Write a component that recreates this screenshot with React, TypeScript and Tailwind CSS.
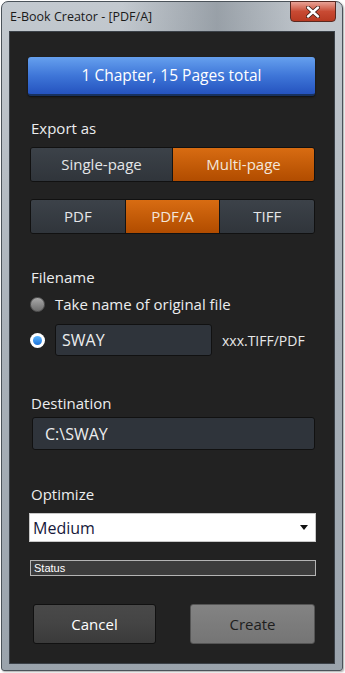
import React from 'react';

const font = { fontFamily: '"Open Sans", "Noto Sans", sans-serif' };

const Segment: React.FC<{ label: string; active?: boolean; last?: boolean }> = ({ label, active, last }) => (
  <div
    className={`flex-1 flex items-center justify-center text-[15px] ${last ? '' : 'border-r border-[#141414]'} ${
      active
        ? 'bg-gradient-to-b from-[#d86c12] to-[#b14c00] text-[#f3e6da]'
        : 'bg-gradient-to-b from-[#3c4249] to-[#30353b] text-[#e4e6e8]'
    }`}
  >
    {label}
  </div>
);

const App: React.FC = () => {
  return (
    <div className="w-[345px] h-[673px] bg-white" style={font}>
      <div className="ml-px mt-px w-[342px] h-[670px] rounded-t-[7px] rounded-b-[3px] border border-[#4a5259] bg-gradient-to-b from-[#c3c9cf] via-[#a9b1b9] to-[#9aa3ac] flex flex-col shadow-[1px_1px_2px_rgba(0,0,0,0.35)]">
        {/* title bar */}
        <div className="h-[29px] flex items-start relative">
          <div className="absolute left-[120px] top-0 w-[190px] h-[29px] bg-gradient-to-r from-transparent via-[#6f7881]/50 to-transparent" />
          <span className="relative mt-[6px] ml-[8px] text-[12.5px] text-[#1a1a1a]">E-Book Creator - [PDF/A]</span>
          <div className="absolute right-[6px] top-[-1px] w-[46px] h-[21px] rounded-b-[4px] border border-[#5a2a22] bg-gradient-to-b from-[#e7a195] via-[#c84a33] to-[#b83a22] flex items-center justify-center">
            <svg width="14" height="12" viewBox="0 0 14 12">
              <path d="M2 1.5 L12 10.5 M12 1.5 L2 10.5" stroke="#3a1a14" strokeWidth="4" strokeLinecap="round" />
              <path d="M2 1.5 L12 10.5 M12 1.5 L2 10.5" stroke="#ffffff" strokeWidth="2.4" strokeLinecap="round" />
            </svg>
          </div>
        </div>

        {/* content */}
        <div className="mx-[7px] h-[633px] border border-[#3b4148] bg-[#222222] flex flex-col text-[#ecedee]">
          <div className="ml-[18px] mt-[25px] w-[287px] h-[39px] rounded-[3px] bg-gradient-to-b from-[#66a0ee] via-[#3f76d8] to-[#2553bf] border-b-2 border-[#17315f] shadow-[0_1px_2px_rgba(0,0,0,0.6)] flex items-center justify-center text-[15.5px] text-white">
            1 Chapter, 15 Pages total
          </div>

          <div className="ml-[21px] mt-[22px] text-[15px] leading-[20px]">Export as</div>
          <div className="ml-[20px] mt-[9px] w-[285px] h-[35px] rounded-[3px] overflow-hidden border border-[#111] flex">
            <Segment label="Single-page" />
            <Segment label="Multi-page" active last />
          </div>
          <div className="ml-[20px] mt-[17px] w-[285px] h-[35px] rounded-[3px] overflow-hidden border border-[#111] flex">
            <Segment label="PDF" />
            <Segment label="PDF/A" active />
            <Segment label="TIFF" last />
          </div>

          <div className="ml-[21px] mt-[33px] text-[15px] leading-[20px]">Filename</div>
          <div className="ml-[20px] mt-[6px] flex items-center h-[22px] gap-[10px]">
            <div className="w-[15px] h-[15px] rounded-full bg-gradient-to-b from-[#a9a9a9] to-[#6e6e6e] border border-[#555]" />
            <span className="text-[15px]">Take name of original file</span>
          </div>
          <div className="ml-[20px] mt-[9px] flex items-center gap-[10px]">
            <div className="w-[15px] h-[15px] rounded-full bg-white flex items-center justify-center">
              <div className="w-[9px] h-[9px] rounded-full bg-gradient-to-b from-[#5cb6ff] to-[#1c72d8]" />
            </div>
            <div className="w-[157px] h-[32px] rounded-[3px] border border-[#111] bg-[#2f343b] flex items-center pl-[6px] text-[16px]">SWAY</div>
            <span className="text-[14px] text-[#e8e8e8]">xxx.TIFF/PDF</span>
          </div>

          <div className="ml-[21px] mt-[37px] text-[15px] leading-[20px]">Destination</div>
          <div className="ml-[22px] mt-[4px] w-[283px] h-[33px] rounded-[3px] border border-[#111] bg-[#2f343b] flex items-center pl-[12px] text-[16px]">
            C:\SWAY
          </div>

          <div className="ml-[21px] mt-[34px] text-[15px] leading-[20px]">Optimize</div>
          <div className="ml-[19px] mt-[9px] w-[287px] h-[29px] bg-white border border-[#c8c8c8] flex items-center justify-between pl-[3px] pr-[7px]">
            <span className="text-[16px] text-[#16183a]">Medium</span>
            <svg width="8" height="5" viewBox="0 0 8 5">
              <path d="M0 0 L8 0 L4 5 Z" fill="#111" />
            </svg>
          </div>

          <div className="ml-[20px] mt-[18px] w-[286px] h-[16px] border border-[#b4b4b4] bg-[#3c3c3c] flex items-center pl-[3px] text-[11px] leading-none text-white" style={{ fontFamily: '"Liberation Sans", Arial, sans-serif' }}>
            Status
          </div>

          <div className="mt-[28px] flex">
            <div className="ml-[23px] w-[123px] h-[40px] rounded-[3px] border border-[#111] bg-gradient-to-b from-[#494949] via-[#444] to-[#3a3a3a] flex items-center justify-center text-[15px] text-white">
              Cancel
            </div>
            <div className="ml-[34px] w-[125px] h-[40px] rounded-[3px] border border-[#555] bg-gradient-to-b from-[#838383] to-[#757575] flex items-center justify-center text-[15px] text-[#1e1e1e]">
              Create
            </div>
          </div>
        </div>
      </div>
    </div>
  );
};

export default App;
